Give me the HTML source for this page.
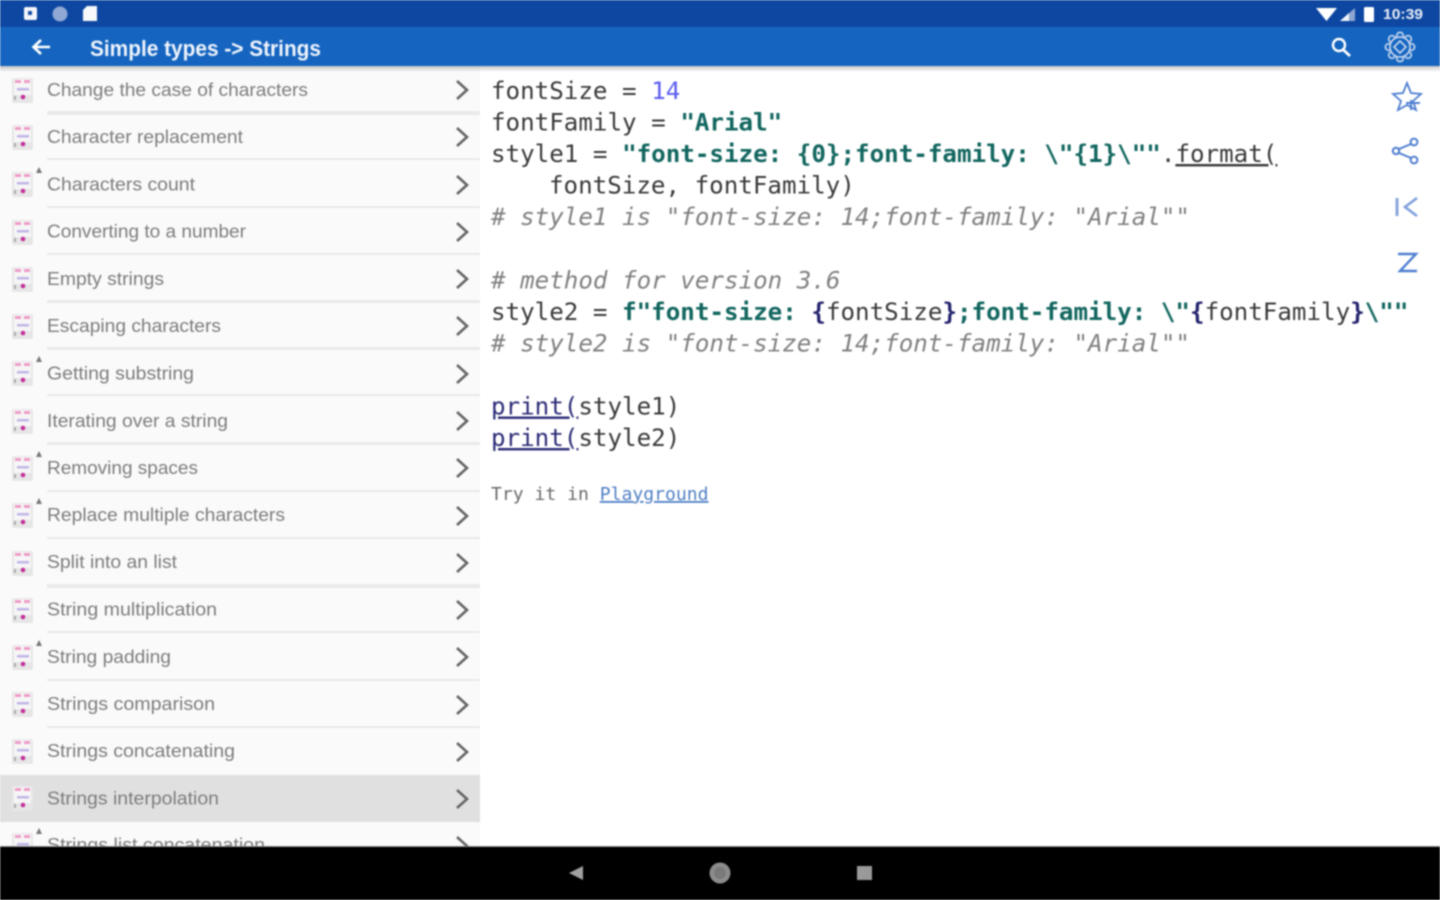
<!DOCTYPE html>
<html lang="en">
<head>
<meta charset="utf-8">
<title>Simple types -&gt; Strings</title>
<style>
html,body{margin:0;padding:0;width:1440px;height:900px;overflow:hidden;background:#fff}
svg{display:block;filter:blur(0.8px)}
.l{font:18.5px "Liberation Sans",sans-serif;fill:#7d7d7d}
.c{font:24.2px "DejaVu Sans Mono",monospace;fill:#3a3a3a;white-space:pre}
.s{font-weight:bold;fill:#12665f}
.n{fill:#5a5cf0}
.b{font-weight:bold;fill:#23236e}
.i{font-style:italic;fill:#808080}
.p{fill:#2c2c78}
.t{font:18.07px "DejaVu Sans Mono",monospace;fill:#6a6a6a}
</style>
</head>
<body>
<svg width="1440" height="900" viewBox="0 0 1440 900" xmlns="http://www.w3.org/2000/svg">
<defs>
<linearGradient id="sh" x1="0" y1="0" x2="0" y2="1"><stop offset="0" stop-color="#000" stop-opacity=".22"/><stop offset="1" stop-color="#000" stop-opacity="0"/></linearGradient>
<g id="ic">
<rect x="13" y="0" width="21" height="25" rx="2" fill="#e6e6e6"/>
<rect x="15" y="1" width="17" height="16" fill="#f6f6f6"/>
<rect x="16" y="2" width="6" height="3" fill="#ee9cc8"/>
<rect x="25" y="2" width="6" height="3" fill="#ee9cc8"/>
<rect x="18" y="10" width="12" height="2.500" fill="#c2b4e6"/>
<circle cx="24" cy="19" r="2.300" fill="#c4309a"/>
<rect x="15" y="18" width="2" height="4" fill="#aaa"/>
</g>
<path id="ch" d="M457 -9 L467 0 L457 9" fill="none" stroke="#666" stroke-width="2.600"/>
<path id="dot" d="M39 -5 L42 1 H36 Z" fill="#777"/>
</defs>

<!-- list panel -->
<rect x="0" y="66" width="480" height="781" fill="#fafafa"/>
<rect x="0" y="775" width="480" height="47" fill="#e0e0e0"/>

<g fill="#e9e9e9">
<rect x="47" y="111" width="433" height="4"/>
<rect x="47" y="158" width="433" height="2"/>
<rect x="47" y="206" width="433" height="2"/>
<rect x="47" y="253" width="433" height="2"/>
<rect x="47" y="300" width="433" height="3"/>
<rect x="47" y="347" width="433" height="3"/>
<rect x="47" y="394" width="433" height="2"/>
<rect x="47" y="442" width="433" height="3"/>
<rect x="47" y="490" width="433" height="2"/>
<rect x="47" y="537" width="433" height="2"/>
<rect x="47" y="584" width="433" height="4"/>
<rect x="47" y="631" width="433" height="2"/>
<rect x="47" y="679" width="433" height="2"/>
<rect x="47" y="726" width="433" height="2"/>
</g>

<use href="#ic" y="78" x="-1"/><use href="#ic" y="125" x="-1"/><use href="#ic" y="172" x="-1"/><use href="#ic" y="220" x="-1"/>
<use href="#ic" y="267" x="-1"/><use href="#ic" y="314" x="-1"/><use href="#ic" y="361" x="-1"/><use href="#ic" y="409" x="-1"/>
<use href="#ic" y="456" x="-1"/><use href="#ic" y="503" x="-1"/><use href="#ic" y="551" x="-1"/><use href="#ic" y="598" x="-1"/>
<use href="#ic" y="645" x="-1"/><use href="#ic" y="692" x="-1"/><use href="#ic" y="739" x="-1"/><use href="#ic" y="786" x="-1"/><use href="#ic" y="833" x="-1"/>

<use href="#dot" y="172"/><use href="#dot" y="361"/><use href="#dot" y="456"/><use href="#dot" y="503"/><use href="#dot" y="645"/><use href="#dot" y="833"/>

<use href="#ch" y="90"/><use href="#ch" y="137"/><use href="#ch" y="185"/><use href="#ch" y="232"/>
<use href="#ch" y="279"/><use href="#ch" y="326"/><use href="#ch" y="374"/><use href="#ch" y="421"/>
<use href="#ch" y="468"/><use href="#ch" y="516"/><use href="#ch" y="563"/><use href="#ch" y="610"/>
<use href="#ch" y="657"/><use href="#ch" y="705"/><use href="#ch" y="752"/><use href="#ch" y="799"/><use href="#ch" y="846"/>

<text class="l" x="47" y="96" textLength="261" lengthAdjust="spacingAndGlyphs">Change the case of characters</text>
<text class="l" x="47" y="143" textLength="196" lengthAdjust="spacingAndGlyphs">Character replacement</text>
<text class="l" x="47" y="190.500" textLength="148" lengthAdjust="spacingAndGlyphs">Characters count</text>
<text class="l" x="47" y="237.500" textLength="199" lengthAdjust="spacingAndGlyphs">Converting to a number</text>
<text class="l" x="47" y="285" textLength="117" lengthAdjust="spacingAndGlyphs">Empty strings</text>
<text class="l" x="47" y="332" textLength="174" lengthAdjust="spacingAndGlyphs">Escaping characters</text>
<text class="l" x="47" y="379.500" textLength="147" lengthAdjust="spacingAndGlyphs">Getting substring</text>
<text class="l" x="47" y="427" textLength="181" lengthAdjust="spacingAndGlyphs">Iterating over a string</text>
<text class="l" x="47" y="474" textLength="151" lengthAdjust="spacingAndGlyphs">Removing spaces</text>
<text class="l" x="47" y="521" textLength="238" lengthAdjust="spacingAndGlyphs">Replace multiple characters</text>
<text class="l" x="47" y="568" textLength="130" lengthAdjust="spacingAndGlyphs">Split into an list</text>
<text class="l" x="47" y="615.500" textLength="170" lengthAdjust="spacingAndGlyphs">String multiplication</text>
<text class="l" x="47" y="663" textLength="124" lengthAdjust="spacingAndGlyphs">String padding</text>
<text class="l" x="47" y="710" textLength="168" lengthAdjust="spacingAndGlyphs">Strings comparison</text>
<text class="l" x="47" y="757" textLength="188" lengthAdjust="spacingAndGlyphs">Strings concatenating</text>
<text class="l" x="47" y="804.500" textLength="172" lengthAdjust="spacingAndGlyphs">Strings interpolation</text>
<text class="l" x="47" y="851" textLength="218" lengthAdjust="spacingAndGlyphs">Strings list concatenation</text>
<rect x="0" y="846" width="480" height="8" fill="#000"/>

<!-- code -->
<text class="c" x="491" y="99" xml:space="preserve">fontSize = <tspan class="n">14</tspan></text>
<text class="c" x="491" y="130.500" xml:space="preserve">fontFamily = <tspan class="s">"Arial"</tspan></text>
<text class="c" x="491" y="162" xml:space="preserve">style1 = <tspan class="s">"font-size: {0};font-family: \"{1}\""</tspan>.<tspan text-decoration="underline">format(</tspan></text>
<text class="c" x="549" y="193.500" xml:space="preserve">fontSize, fontFamily)</text>
<text class="c i" x="491" y="225" xml:space="preserve"># style1 is "font-size: 14;font-family: "Arial""</text>
<text class="c i" x="491" y="288.500" xml:space="preserve"># method for version 3.6</text>
<text class="c" x="491" y="320" xml:space="preserve">style2 = <tspan class="s">f"font-size: </tspan><tspan class="b">{</tspan>fontSize<tspan class="b">}</tspan><tspan class="s">;font-family: \"</tspan><tspan class="b">{</tspan>fontFamily<tspan class="b">}</tspan><tspan class="s">\""</tspan></text>
<text class="c i" x="491" y="351.500" xml:space="preserve"># style2 is "font-size: 14;font-family: "Arial""</text>
<text class="c" x="491" y="414.500" xml:space="preserve"><tspan class="p" text-decoration="underline">print(</tspan>style1)</text>
<text class="c" x="491" y="446" xml:space="preserve"><tspan class="p" text-decoration="underline">print(</tspan>style2)</text>
<text class="t" x="491" y="500" xml:space="preserve">Try it in <tspan fill="#4f7fc4" text-decoration="underline">Playground</tspan></text>

<!-- side icons -->
<g fill="none" stroke="#4f7fd0" stroke-width="2">
<path d="M1407 83 L1411 93 L1421 94 L1413 101 L1416 110 L1407 105 L1398 110 L1401 101 L1393 94 L1403 93 Z" stroke-width="1.800"/>
<path d="M1411 100 V110 M1406 103 H1420" stroke-width="2"/>
<circle cx="1396" cy="151" r="3.200"/><circle cx="1414" cy="142" r="3.400"/><circle cx="1414" cy="160" r="3.400"/>
<path d="M1399 149 L1411 144 M1399 153 L1411 158"/>
<path d="M1397 198 V216" stroke-width="3" stroke="#8aa6dc"/>
<path d="M1417 198 L1405 207 L1417 216" stroke-width="2.600" stroke="#7f9fdc"/>
<path d="M1398 254 H1416 L1400 271 H1417" stroke-width="2.400"/>
</g>

<!-- toolbar shadow -->
<rect x="0" y="66" width="1440" height="6" fill="url(#sh)"/>

<!-- status bar -->
<rect x="0" y="0" width="1440" height="27" fill="#0d47a1"/>
<rect x="24" y="7" width="13" height="13" rx="2" fill="#f4f6fb"/>
<rect x="28" y="11" width="4" height="4" fill="#1a4fa5"/>
<circle cx="60" cy="14" r="7.500" fill="#8fa9d4"/>
<path d="M83 10 L87 6 H97 V21 H83 Z" fill="#f6f8fc"/>
<path d="M1316 8 H1337 L1326.500 21 Z" fill="#fff"/>
<path d="M1355 8 V21 H1340 Z" fill="#8fa6d0"/>
<path d="M1349 13 V21 H1340 Z" fill="#f0f3fa"/>
<rect x="1364" y="7" width="10" height="15" rx="1.500" fill="#fff"/>
<text x="1383" y="19" font-family="Liberation Sans,sans-serif" font-size="15" font-weight="bold" fill="#e6ecf7" textLength="40" lengthAdjust="spacingAndGlyphs">10:39</text>

<!-- toolbar -->
<rect x="0" y="27" width="1440" height="39" fill="#1565c0"/>
<path d="M50 47 H34 M41 40 L33.500 47 L41 54" fill="none" stroke="#fff" stroke-width="2.600"/>
<text x="90" y="56" font-family="Liberation Sans,sans-serif" font-size="22" font-weight="bold" fill="#eef3fb" textLength="231" lengthAdjust="spacingAndGlyphs">Simple types -&gt; Strings</text>
<circle cx="1339" cy="45" r="6" fill="none" stroke="#fff" stroke-width="2.400"/>
<path d="M1343.500 50 L1350 56" stroke="#fff" stroke-width="2.800"/>
<g fill="#1565c0" stroke="#c3d4ee" stroke-width="1.700">
<circle cx="1411.300" cy="47" r="3.300"/><circle cx="1408" cy="39" r="3.300"/><circle cx="1400" cy="35.700" r="3.300"/><circle cx="1392" cy="39" r="3.300"/>
<circle cx="1388.700" cy="47" r="3.300"/><circle cx="1392" cy="55" r="3.300"/><circle cx="1400" cy="58.300" r="3.300"/><circle cx="1408" cy="55" r="3.300"/>
<circle cx="1400" cy="47" r="10"/>
<path d="M1400 41 L1406 47 L1400 53 L1394 47 Z"/>
</g>

<!-- nav bar -->
<rect x="0" y="846" width="1440" height="1" fill="#8c8c8c"/>
<rect x="0" y="847" width="1440" height="53" fill="#000"/>
<path d="M583 866 V880 L569 873 Z" fill="#a0a0a0"/>
<circle cx="720" cy="873" r="10.500" fill="#8c8c8c"/>
<circle cx="720" cy="873" r="6" fill="#7a7a7a"/>
<rect x="857" y="866" width="15" height="14" fill="#9a9a9a"/>
</svg>
</body>
</html>
